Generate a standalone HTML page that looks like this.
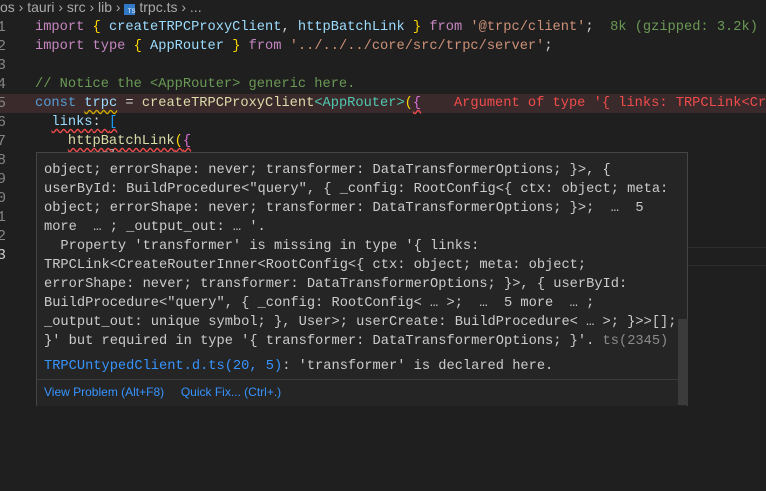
<!DOCTYPE html>
<html><head><style>
html,body{margin:0;width:766px;height:491px;overflow:hidden;}
body{background:#1f1f1f;position:relative;font-family:"Liberation Mono",monospace;font-size:13.7px;}
#w{position:absolute;left:0;top:0;width:766px;height:491px;overflow:hidden;}
.l{position:absolute;left:35px;white-space:pre;color:#d4d4d4;height:19px;line-height:19px;}
.n{position:absolute;left:-3px;width:12px;color:#858585;white-space:pre;line-height:19px;font-size:15px;}
.k{color:#c586c0}.v{color:#9cdcfe}.f{color:#dcdcaa}.s{color:#ce9178}.t{color:#4ec9b0}.c{color:#6a9955}.b{color:#569cd6}.y{color:#ffd700}.p{color:#da70d6}.bl{color:#179fff}
.sq{text-decoration:underline wavy #f14c4c;text-decoration-skip-ink:none;text-underline-offset:3px}
.hv{position:absolute;left:36px;top:152px;width:650px;height:252px;background:#252526;border:1px solid #454545;}
.hl{position:absolute;left:7px;white-space:pre;color:#cccccc;line-height:19px;}
</style></head><body><div id="w">
<div style="position:absolute;left:0;top:0;height:17px;font-family:'Liberation Sans',sans-serif;font-size:14px;color:#a9a9a9;line-height:15px;white-space:pre">os › tauri › src › lib › <span style="display:inline-block;width:11px;height:11px;background:#3178c6;color:#fff;font-size:6px;line-height:16px;vertical-align:-1px;text-align:right">TS</span> trpc.ts › ...</div>

<div style="position:absolute;left:0;top:94px;width:766px;height:19px;background:#3a2a2b"></div>
<div style="position:absolute;left:688px;top:247px;width:78px;height:17px;border-top:1px solid #2d2d2d;border-bottom:1px solid #2d2d2d"></div>

<div class="n" style="top:18px">1</div>
<div class="n" style="top:37px">2</div>
<div class="n" style="top:56px">3</div>
<div class="n" style="top:75px">4</div>
<div class="n" style="top:94px">5</div>
<div class="n" style="top:113px">6</div>
<div class="n" style="top:132px">7</div>
<div class="n" style="top:151px">8</div>
<div class="n" style="top:170px">9</div>
<div class="n" style="top:189px">0</div>
<div class="n" style="top:208px">1</div>
<div class="n" style="top:227px">2</div>
<div class="n" style="top:246px;color:#ccc">3</div>

<div class="l" style="top:18px"><span class="k">import</span> <span class="y">{</span> <span class="v">createTRPCProxyClient</span>, <span class="v">httpBatchLink</span> <span class="y">}</span> <span class="k">from</span> <span class="s">'@trpc/client'</span>;  <span class="c">8k (gzipped: 3.2k)</span></div>
<div class="l" style="top:37px"><span class="k">import</span> <span class="k">type</span> <span class="y">{</span> <span class="v">AppRouter</span> <span class="y">}</span> <span class="k">from</span> <span class="s">'../../../core/src/trpc/server'</span>;</div>
<div class="l" style="top:75px"><span class="c">// Notice the &lt;AppRouter&gt; generic here.</span></div>
<div class="l" style="top:94px"><span class="b">const</span> <span class="v" style="text-decoration:underline wavy #cca700;text-underline-offset:3px">trpc</span> = <span class="f">createTRPCProxyClient</span><span class="t">&lt;AppRouter&gt;</span><span class="y">(</span><span class="p sq">{</span>    <span style="color:#f14c4c">Argument of type '{ links: TRPCLink&lt;Cr</span></div>
<div class="l" style="top:113px">  <span class="sq"><span class="v">links</span>: <span class="bl">[</span></span></div>
<div class="l" style="top:132px">    <span class="sq"><span class="f">httpBatchLink</span><span class="y">(</span><span class="p">{</span></span></div>
<div class="l" style="top:147px;color:#aaa">       url: ...</div>

<div class="hv">
<div class="hl" style="top:8px">object; errorShape: never; transformer: DataTransformerOptions; }&gt;, {</div>
<div class="hl" style="top:27px">userById: BuildProcedure&lt;"query", { _config: RootConfig&lt;{ ctx: object; meta:</div>
<div class="hl" style="top:46px">object; errorShape: never; transformer: DataTransformerOptions; }&gt;;  …  5</div>
<div class="hl" style="top:65px">more  … ; _output_out: … '.</div>
<div class="hl" style="top:84px">  Property 'transformer' is missing in type '{ links:</div>
<div class="hl" style="top:103px">TRPCLink&lt;CreateRouterInner&lt;RootConfig&lt;{ ctx: object; meta: object;</div>
<div class="hl" style="top:122px">errorShape: never; transformer: DataTransformerOptions; }&gt;, { userById:</div>
<div class="hl" style="top:141px">BuildProcedure&lt;"query", { _config: RootConfig&lt; … &gt;;  …  5 more  … ;</div>
<div class="hl" style="top:160px">_output_out: unique symbol; }, User&gt;; userCreate: BuildProcedure&lt; … &gt;; }&gt;&gt;[];</div>
<div class="hl" style="top:179px">}' but required in type '{ transformer: DataTransformerOptions; }'. <span style="color:#8b8b8b">ts(2345)</span></div>
<div class="hl" style="top:204px"><span style="color:#3794ff">TRPCUntypedClient.d.ts(20, 5)</span>: 'transformer' is declared here.</div>
<div style="position:absolute;left:0;top:226px;width:650px;height:26px;border-top:1px solid #3a3a3a;background:#252526"></div>
<div style="position:absolute;left:7px;top:231px;font-family:'Liberation Sans',sans-serif;font-size:12px;color:#3794ff;white-space:pre;line-height:16px">View Problem (Alt+F8)     Quick Fix... (Ctrl+.)</div>
<div style="position:absolute;left:641px;top:166px;width:10px;height:86px;background:#3b3b3b"></div>
</div>
</div></body></html>
